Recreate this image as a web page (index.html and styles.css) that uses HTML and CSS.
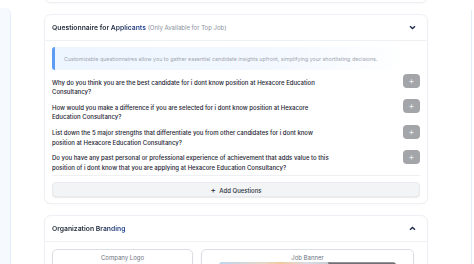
FILE: index.html
```html
<!DOCTYPE html>
<html lang="en">
<head>
    <meta charset="UTF-8">
    <title>Job Post - Questionnaire</title>
    <link rel="stylesheet" href="styles.css">
</head>
<body>

<div class="layout">
    <div class="side-left"></div>

    <div class="main">
        <div class="card card-prev"></div>

        <div class="card">
            <div class="card-head">
                <div class="title"><span class="grad">Questionnaire for Applicants</span> <span class="muted">(Only Available for Top Job)</span></div>
                <svg class="chev" width="7" height="5" viewBox="0 0 7 5"><path d="M1 1.2 L3.5 3.6 L6 1.2" fill="none" stroke="#1e2a4a" stroke-width="1.4"/></svg>
            </div>
            <div class="card-body">
                <div class="info">Customizable questionnaires allow you to gather essential candidate insights upfront, simplifying your shortlisting decisions.</div>

                <div class="questions">
                    <div class="q-row">
                        <p class="q-text">Why do you think you are the best candidate for i dont know position at Hexacore Education Consultancy?</p>
                        <button class="plus-btn">+</button>
                    </div>
                    <div class="q-row">
                        <p class="q-text">How would you make a difference if you are selected for i dont know position at Hexacore Education Consultancy?</p>
                        <button class="plus-btn">+</button>
                    </div>
                    <div class="q-row">
                        <p class="q-text">List down the 5 major strengths that differentiate you from other candidates for i dont know position at Hexacore Education Consultancy?</p>
                        <button class="plus-btn">+</button>
                    </div>
                    <div class="q-row">
                        <p class="q-text">Do you have any past personal or professional experience of achievement that adds value to this position of i dont know that you are applying at Hexacore Education Consultancy?</p>
                        <button class="plus-btn">+</button>
                    </div>
                </div>

                <button class="add-btn"><span class="add-plus">+</span> Add Questions</button>
            </div>
        </div>

        <div class="card">
            <div class="card-head">
                <div class="title"><span class="grad">Organization Branding</span></div>
                <svg class="chev" width="7" height="5" viewBox="0 0 7 5"><path d="M1 3.8 L3.5 1.4 L6 3.8" fill="none" stroke="#1e2a4a" stroke-width="1.4"/></svg>
            </div>
            <div class="card-body branding">
                <div class="upload logo-box">
                    <div class="upload-label">Company Logo</div>
                    <div class="logo-slot"></div>
                </div>
                <div class="upload banner-box">
                    <div class="upload-label">Job Banner</div>
                    <div class="banner-img">
                        <div class="banner-photo"></div>
                        <div class="banner-dark"></div>
                    </div>
                </div>
            </div>
        </div>
    </div>

    <div class="side-right"></div>
</div>

</body>
</html>
```

FILE: styles.css
```css
body {
    margin: 0;
    background: #ffffff;
    font-family: Inter, "Noto Sans", sans-serif;
    color: #1f2937;
    overflow: hidden;
}
.layout {
    display: flex;
    height: 264px;
    overflow: hidden;
}
.side-left {
    width: 10px;
    margin-top: 8px;
    background: #f6faff;
    border-right: 1px solid #e4eefa;
    border-top-right-radius: 6px;
    flex-shrink: 0;
}
.main {
    width: 385px;
    margin-left: 33px;
    display: flex;
    flex-direction: column;
    gap: 11px;
}
.side-right {
    margin-left: 43px;
    margin-top: 10px;
    width: 2px;
    border-left: 1px solid #e3eefb;
}
.card {
    background: white;
    border: 1px solid #edf0f4;
    border-radius: 7px;
    box-shadow: 0 1px 2px rgba(15, 23, 42, 0.03);
    flex-shrink: 0;
}
.card-prev {
    height: 20px;
    margin-top: -19px;
}
.card-head {
    height: 25px;
    display: flex;
    align-items: center;
    justify-content: space-between;
    padding: 0 11px 0 7px;
    border-bottom: 1px solid #eef1f4;
}
.title {
    font-size: 6.8px;
    font-weight: 600;
}
.grad {
    background: linear-gradient(90deg, #1f2937 60%, #22449a 100%);
    -webkit-background-clip: text;
    background-clip: text;
    color: transparent;
}
.muted {
    color: #8a909b;
    font-weight: 400;
    font-size: 6px;
}
.chev {
    display: block;
}
.card-body {
    padding: 6px 7px 6px;
}
.info {
    height: 23px;
    box-sizing: border-box;
    width: 358px;
    display: flex;
    align-items: center;
    padding-left: 9px;
    font-size: 5.35px;
    color: #a0a6b0;
    border-left: 3px solid #5b9cf4;
    border-radius: 3px;
    background: linear-gradient(90deg, #edf5ff 0%, #f3f8ff 60%, rgba(255,255,255,0) 100%);
}
.questions {
    margin-top: 4px;
    display: flex;
    flex-direction: column;
    gap: 3px;
    padding-bottom: 3px;
    border-bottom: 1px solid #eef0f3;
}
.q-row {
    display: flex;
    justify-content: space-between;
    align-items: flex-start;
}
.q-text {
    margin: 0;
    padding-top: 3.5px;
    width: 280px;
    font-size: 6px;
    font-weight: 500;
    line-height: 9.4px;
    color: #1a2230;
}
.plus-btn {
    width: 17px;
    height: 14px;
    padding: 0;
    border: none;
    border-radius: 4px;
    background: #a3a5a9;
    color: #eceef1;
    font-family: Inter, sans-serif;
    font-size: 9px;
    line-height: 14px;
}
.add-btn {
    display: block;
    width: 100%;
    height: 15px;
    margin-top: 6px;
    border: 1px solid #e7e9ec;
    border-radius: 4px;
    background: #f3f4f6;
    box-shadow: 0 1px 1px rgba(0, 0, 0, 0.08);
    font-family: Inter, sans-serif;
    font-size: 6px;
    font-weight: 500;
    color: #2b3340;
}
.add-plus {
    font-size: 8px;
    margin-right: 2px;
}
.branding {
    display: flex;
    gap: 8px;
    padding-top: 7px;
}
.upload {
    border: 1px solid #dadde2;
    border-radius: 5px;
    box-shadow: 0 1px 2px rgba(0, 0, 0, 0.05);
    height: 40px;
    box-sizing: border-box;
}
.logo-box {
    width: 141px;
}
.banner-box {
    width: 213px;
}
.upload-label {
    text-align: center;
    font-size: 6px;
    color: #6b7280;
    margin-top: 4px;
}
.logo-slot {
    width: 32px;
    height: 14px;
    margin: 3px auto 0;
    border: 1px solid #e2e5e9;
    border-radius: 4px;
}
.banner-img {
    display: flex;
    width: 177px;
    height: 14px;
    margin: 1px 0 0 17px;
    border-radius: 3px;
    overflow: hidden;
}
.banner-photo {
    width: 111px;
    background: linear-gradient(90deg, #bcd6ee 0%, #e6d8c8 40%, #f1c9a0 55%, #d9dde6 80%, #c8ccd4 100%);
}
.banner-dark {
    flex: 1;
    background: #6f7073;
    clip-path: polygon(0 0, 100% 0, 100% 100%, 4px 100%);
    margin-left: -2px;
}
```
